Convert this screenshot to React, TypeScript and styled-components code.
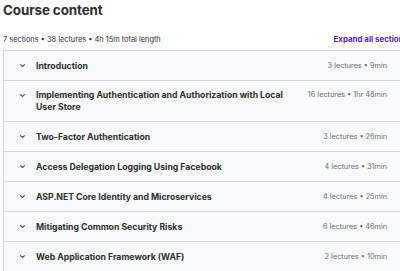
import React from "react";
import styled, { createGlobalStyle } from "styled-components";

const Global = createGlobalStyle`
  html, body { margin: 0; padding: 0; background: #fff; overflow: hidden; }
  body { font-family: Inter, "Noto Sans", Arial, sans-serif; color: #2d2f31; }
`;

const Page = styled.div`
  width: 408px;
  padding: 0 0 0 3px;
  box-sizing: border-box;
`;

const Title = styled.h2`
  margin: 0;
  padding-top: 2px;
  font-size: 13.4px;
  line-height: 17px;
  font-weight: 700;
  letter-spacing: -0.1px;
  color: #2d2f31;
`;

const SubBar = styled.div`
  display: flex;
  justify-content: space-between;
  align-items: center;
  height: 14px;
  margin-top: 13px;
  margin-bottom: 4px;
  font-size: 7.4px;
`;

const Summary = styled.span`
  color: #2d2f31;
`;

const ExpandLink = styled.span`
  color: #5624d0;
  font-weight: 700;
  white-space: nowrap;
  font-size: 7.9px;
`;

const Sections = styled.div`
  border: 1px solid #d1d7dc;
  border-bottom: none;
`;

const Row = styled.div`
  display: flex;
  align-items: center;
  min-height: 29px;
  padding: 0 20px 0 15px;
  background: #f7f9fa;
  border-bottom: 1px solid #d1d7dc;
  box-sizing: content-box;
`;

const Chevron = styled.span<{ $twoLine?: boolean }>`
  display: flex;
  align-items: center;
  width: 10px;
  height: 12px;
  margin-right: 7px;
  align-self: ${(p) => (p.$twoLine ? "flex-start" : "center")};
  margin-top: ${(p) => (p.$twoLine ? "8px" : "0")};
`;

const RowTitle = styled.div<{ $twoLine?: boolean }>`
  flex: 1;
  font-size: 8.7px;
  font-weight: 700;
  line-height: 12px;
  padding: ${(p) => (p.$twoLine ? "8px 0" : "0")};
  padding-right: 10px;
  color: #2d2f31;
`;

const Meta = styled.div<{ $twoLine?: boolean }>`
  font-size: 7.3px;
  line-height: 12px;
  color: #6a6f73;
  white-space: nowrap;
  align-self: ${(p) => (p.$twoLine ? "flex-start" : "center")};
  padding-top: ${(p) => (p.$twoLine ? "8px" : "0")};
`;

const sections = [
  { title: "Introduction", meta: "3 lectures • 9min" },
  { title: "Implementing Authentication and Authorization with Local User Store", meta: "16 lectures • 1hr 48min", two: true },
  { title: "Two-Factor Authentication", meta: "3 lectures • 26min" },
  { title: "Access Delegation Logging Using Facebook", meta: "4 lectures • 31min" },
  { title: "ASP.NET Core Identity and Microservices", meta: "4 lectures • 25min" },
  { title: "Mitigating Common Security Risks", meta: "6 lectures • 46min" },
  { title: "Web Application Framework (WAF)", meta: "2 lectures • 10min" },
];

const ChevronIcon = () => (
  <svg width="7" height="5" viewBox="0 0 7 5">
    <path d="M1.2 1.3 L3.5 3.5 L5.8 1.3" fill="none" stroke="#4a4d50" strokeWidth="1.1" />
  </svg>
);

export default function App() {
  return (
    <>
      <Global />
      <Page>
        <Title>Course content</Title>
        <SubBar>
          <Summary>7 sections • 38 lectures • 4h 15m total length</Summary>
          <ExpandLink>Expand all sections</ExpandLink>
        </SubBar>
        <Sections>
          {sections.map((s) => (
            <Row key={s.title}>
              <Chevron $twoLine={s.two}>
                <ChevronIcon />
              </Chevron>
              <RowTitle $twoLine={s.two}>{s.title}</RowTitle>
              <Meta $twoLine={s.two}>{s.meta}</Meta>
            </Row>
          ))}
        </Sections>
      </Page>
    </>
  );
}
